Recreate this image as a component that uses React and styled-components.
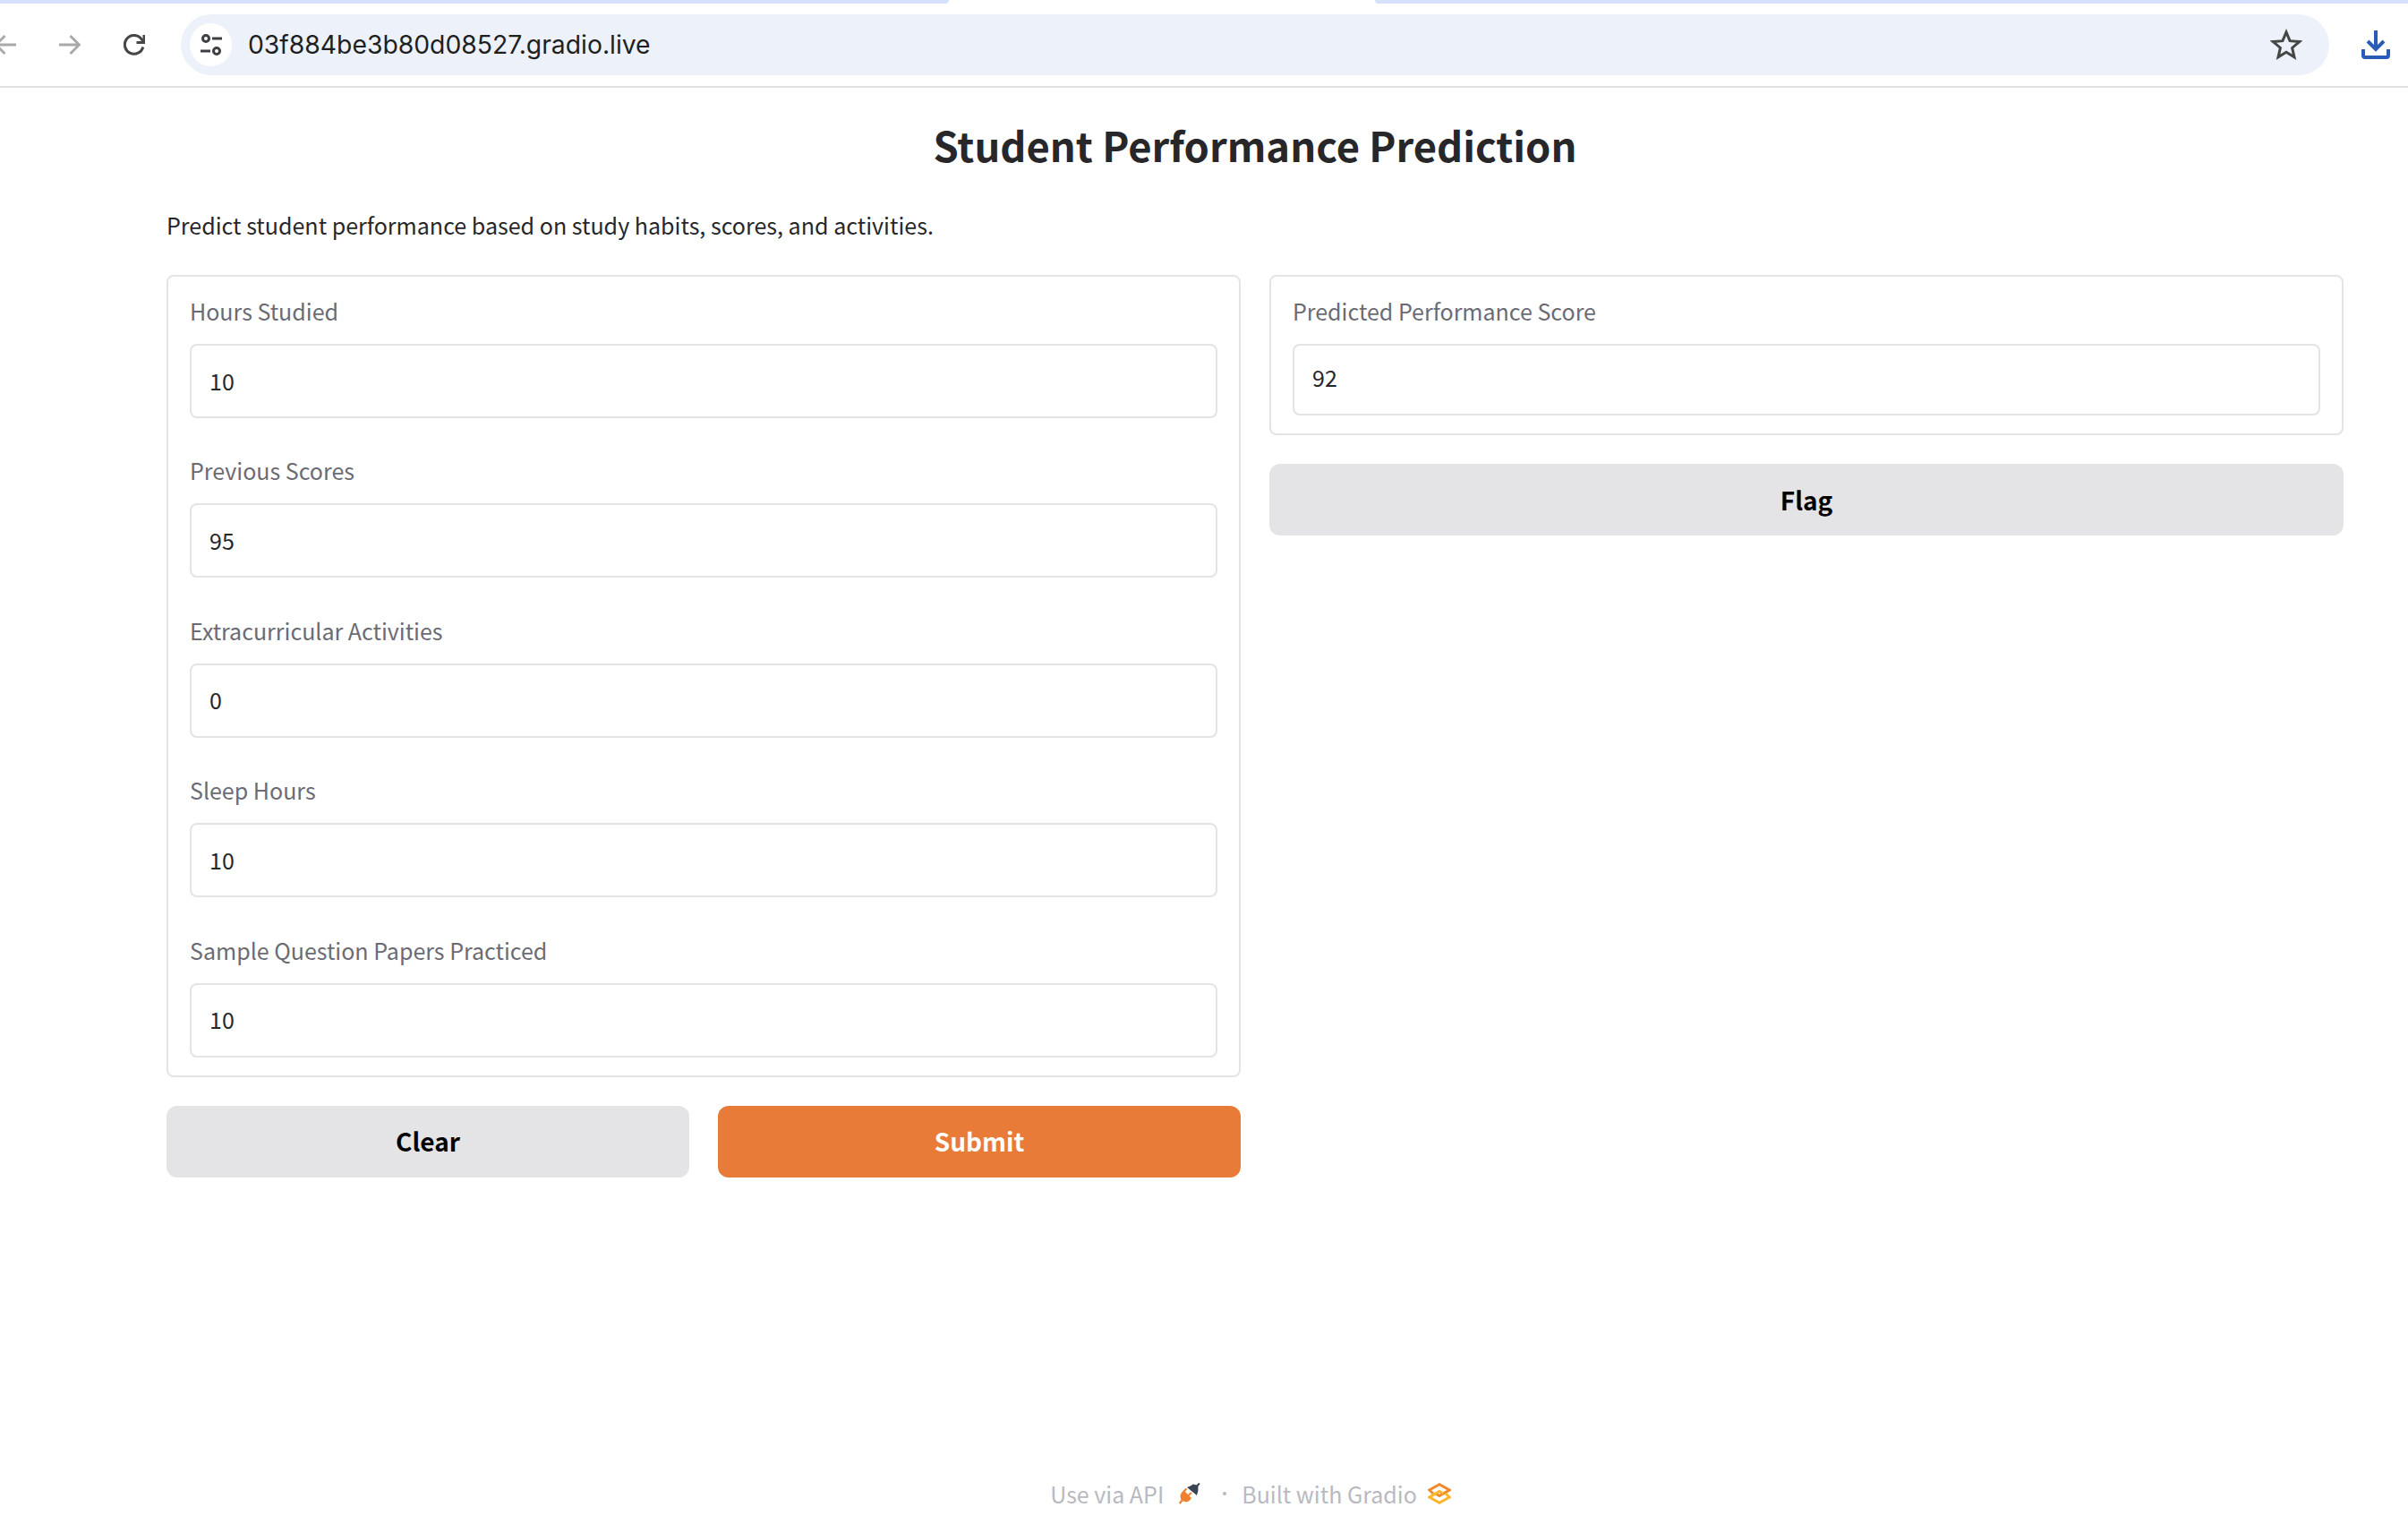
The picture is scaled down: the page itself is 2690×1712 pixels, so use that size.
import styled, { createGlobalStyle } from 'styled-components';

const GlobalStyle = createGlobalStyle`
  html, body {
    margin: 0;
    padding: 0;
    background: #ffffff;
  }
  * {
    box-sizing: border-box;
  }
`;

const Page = styled.div`
  display: flex;
  flex-direction: column;
  width: 2690px;
  height: 1712px;
  overflow: hidden;
  font-family: 'Noto Sans CJK SC', 'Noto Sans', sans-serif;
`;

/* browser chrome */
const TabStrip = styled.div`
  display: flex;
  justify-content: space-between;
  height: 16px;
`;

const TabEdge = styled.div`
  width: ${(p) => p.$width}px;
  height: 4px;
  background: #d6e2fb;
  border-bottom-${(p) => p.$side}-radius: 8px;
`;

const Toolbar = styled.div`
  display: flex;
  align-items: center;
  height: 82px;
  padding-bottom: 12px;
  border-bottom: 2px solid #e0e0e0;
`;

const NavGroup = styled.div`
  display: flex;
  align-items: center;
  gap: 48px;
  margin-left: -6px;
  margin-right: 40px;
`;

const NavIcon = styled.svg`
  display: block;
  width: 24px;
  height: 24px;
  fill: none;
  stroke: ${(p) => (p.$dim ? '#a8a9a9' : '#474747')};
  stroke-width: 3;
`;

const UrlBar = styled.div`
  display: flex;
  align-items: center;
  width: 2400px;
  height: 68px;
  padding: 0 30px 0 10px;
  border-radius: 34px;
  background: #edf2fa;
`;

const SiteInfo = styled.div`
  display: flex;
  align-items: center;
  justify-content: center;
  width: 47px;
  height: 48px;
  border-radius: 50%;
  background: #ffffff;
`;

const UrlText = styled.span`
  flex: 1;
  margin-left: 18px;
  font-family: Inter, 'Liberation Sans', sans-serif;
  font-size: 28.3px;
  color: #1f1f1f;
`;

const DownloadSlot = styled.div`
  display: flex;
  margin-left: 36px;
`;

/* gradio page */
const Main = styled.main`
  flex: 1;
  display: flex;
  flex-direction: column;
  width: 2432px;
  margin-left: 186px;
`;

const Title = styled.h1`
  margin: 33px 0 0;
  font-size: 45.3px;
  line-height: 60px;
  font-weight: 700;
  text-align: center;
  color: #27272a;
`;

const Description = styled.p`
  margin: 42px 0 38px;
  font-size: 25.05px;
  line-height: 36px;
  color: #27272a;
`;

const Columns = styled.div`
  display: grid;
  grid-template-columns: 1fr 1fr;
  gap: 32px;
`;

const Column = styled.div`
  display: flex;
  flex-direction: column;
  gap: 32px;
`;

const Panel = styled.div`
  display: flex;
  flex-direction: column;
  gap: 41.4px;
  padding: 21px 24px 20px 24px;
  border: 2px solid #e4e4e7;
  border-radius: 8px;
`;

const Field = styled.div`
  display: flex;
  flex-direction: column;
  gap: 18px;
`;

const Label = styled.span`
  height: 36px;
  font-size: 25px;
  line-height: 34px;
  color: #6b6b74;
`;

const ValueBox = styled.div`
  display: flex;
  align-items: center;
  height: ${(p) => p.$height}px;
  padding-left: 20px;
  padding-bottom: ${(p) => p.$lift}px;
  border: 2px solid #e4e4e7;
  border-radius: 8px;
  font-size: 25px;
  color: #27272a;
`;

const ButtonRow = styled.div`
  display: grid;
  grid-template-columns: 1fr 1fr;
  gap: 32px;
`;

const Button = styled.button`
  height: 80px;
  padding-bottom: 2px;
  border: none;
  border-radius: 12px;
  background: ${(p) => (p.$primary ? '#e87b37' : '#e4e4e7')};
  color: ${(p) => (p.$primary ? '#ffffff' : '#000000')};
  font-family: inherit;
  font-size: 28px;
  font-weight: 700;
`;

const Footer = styled.footer`
  display: flex;
  align-items: center;
  justify-content: center;
  margin-top: auto;
  height: 88px;
  padding-right: 10px;
  font-size: 25px;
  color: #b9b9c1;
`;

const FooterLink = styled.span`
  display: flex;
  align-items: center;
  gap: ${(p) => p.$gap}px;
`;

const Dot = styled.span`
  width: 4px;
  height: 4px;
  margin: 0 17px 0 25px;
  border-radius: 50%;
  background: #b9b9c1;
`;

const inputs = [
  ['Hours Studied', '10'],
  ['Previous Scores', '95'],
  ['Extracurricular Activities', '0'],
  ['Sleep Hours', '10'],
  ['Sample Question Papers Practiced', '10'],
];

function PlugIcon() {
  return (
    <svg width="24" height="24" viewBox="0 0 24 24">
      <path d="M9 5 Q13 3.5 16 1.5 L21.5 3 Q22 9 20 14 Z" fill="#3b4454" />
      <path d="M20 3.5 L23 0.6" stroke="#3b4454" strokeWidth="2" fill="none" />
      <path d="M5.5 8.5 L14 17 Q11.5 22 6.5 21 Q1.5 20 1.5 15 Q1.8 11 5.5 8.5 Z" fill="#f0802f" />
      <path d="M5.5 9.5 L8.5 6.5 M10.5 14 L14 11" stroke="#f0802f" strokeWidth="2.2" fill="none" />
      <path d="M3.5 19.5 L0.8 23" stroke="#f0802f" strokeWidth="2.2" fill="none" />
    </svg>
  );
}

function GradioLogo() {
  return (
    <svg width="26" height="24" viewBox="0 0 26 24" fill="none" strokeWidth="3">
      <path d="M6 12 L1.8 8 L13 1.8 L24.2 8 L13 14.5 L8.5 12" stroke="#f08a2c" />
      <path d="M20 12 L24.2 16 L13 22.2 L1.8 16 L13 9.5 L17.5 12" stroke="#fbb62c" />
    </svg>
  );
}

function App() {
  return (
    <Page>
      <GlobalStyle />
      <TabStrip>
        <TabEdge $width={1060} $side="right" />
        <TabEdge $width={1154} $side="left" />
      </TabStrip>
      <Toolbar>
        <NavGroup>
          <NavIcon $dim viewBox="0 0 24 24">
            <path d="M24 12 H1.5 M11.5 2 L1.5 12 L11.5 22" />
          </NavIcon>
          <NavIcon $dim viewBox="0 0 24 24">
            <path d="M0 12 H22.5 M12.5 2 L22.5 12 L12.5 22" />
          </NavIcon>
          <NavIcon viewBox="0 0 24 24">
            <path d="M21.8 14.5 A10.4 10.4 0 1 1 18.8 4.2 L22.5 8.5" />
            <path d="M23 1 V9.5 H14.5" />
          </NavIcon>
        </NavGroup>
        <UrlBar>
          <SiteInfo>
            <svg width="26" height="24" viewBox="0 0 26 24" fill="none" stroke="#3c3f43" strokeWidth="3">
              <circle cx="7" cy="5" r="3.5" />
              <path d="M14 5 H25" />
              <path d="M1 19 H12" />
              <circle cx="19" cy="19" r="3.5" />
            </svg>
          </SiteInfo>
          <UrlText>03f884be3b80d08527.gradio.live</UrlText>
          <svg width="36" height="36" viewBox="0 0 24 24" fill="none" stroke="#444746" strokeWidth="2" strokeLinejoin="miter">
            <path d="M12 2.6 L14.7 9.1 L21.8 9.7 L16.4 14.3 L18 21.2 L12 17.5 L6 21.2 L7.6 14.3 L2.2 9.7 L9.3 9.1 Z" />
          </svg>
        </UrlBar>
        <DownloadSlot>
          <svg width="32" height="32" viewBox="0 0 32 32" fill="none" stroke="#2b5bb8" strokeWidth="4">
            <path d="M16 0 V20 M7 12 L16 21 L25 12" />
            <path d="M2 21 V28 Q2 30 4 30 H28 Q30 30 30 28 V21" />
          </svg>
        </DownloadSlot>
      </Toolbar>
      <Main>
        <Title>Student Performance Prediction</Title>
        <Description>Predict student performance based on study habits, scores, and activities.</Description>
        <Columns>
          <Column>
            <Panel>
              {inputs.map(([label, value]) => (
                <Field key={label}>
                  <Label>{label}</Label>
                  <ValueBox $height={83} $lift={2}>{value}</ValueBox>
                </Field>
              ))}
            </Panel>
            <ButtonRow>
              <Button>Clear</Button>
              <Button $primary>Submit</Button>
            </ButtonRow>
          </Column>
          <Column>
            <Panel>
              <Field>
                <Label>Predicted Performance Score</Label>
                <ValueBox $height={80} $lift={6}>92</ValueBox>
              </Field>
            </Panel>
            <Button>Flag</Button>
          </Column>
        </Columns>
        <Footer>
          <FooterLink $gap={17}>
            Use via API <PlugIcon />
          </FooterLink>
          <Dot />
          <FooterLink $gap={12}>
            Built with Gradio <GradioLogo />
          </FooterLink>
        </Footer>
      </Main>
    </Page>
  );
}

export default App;
